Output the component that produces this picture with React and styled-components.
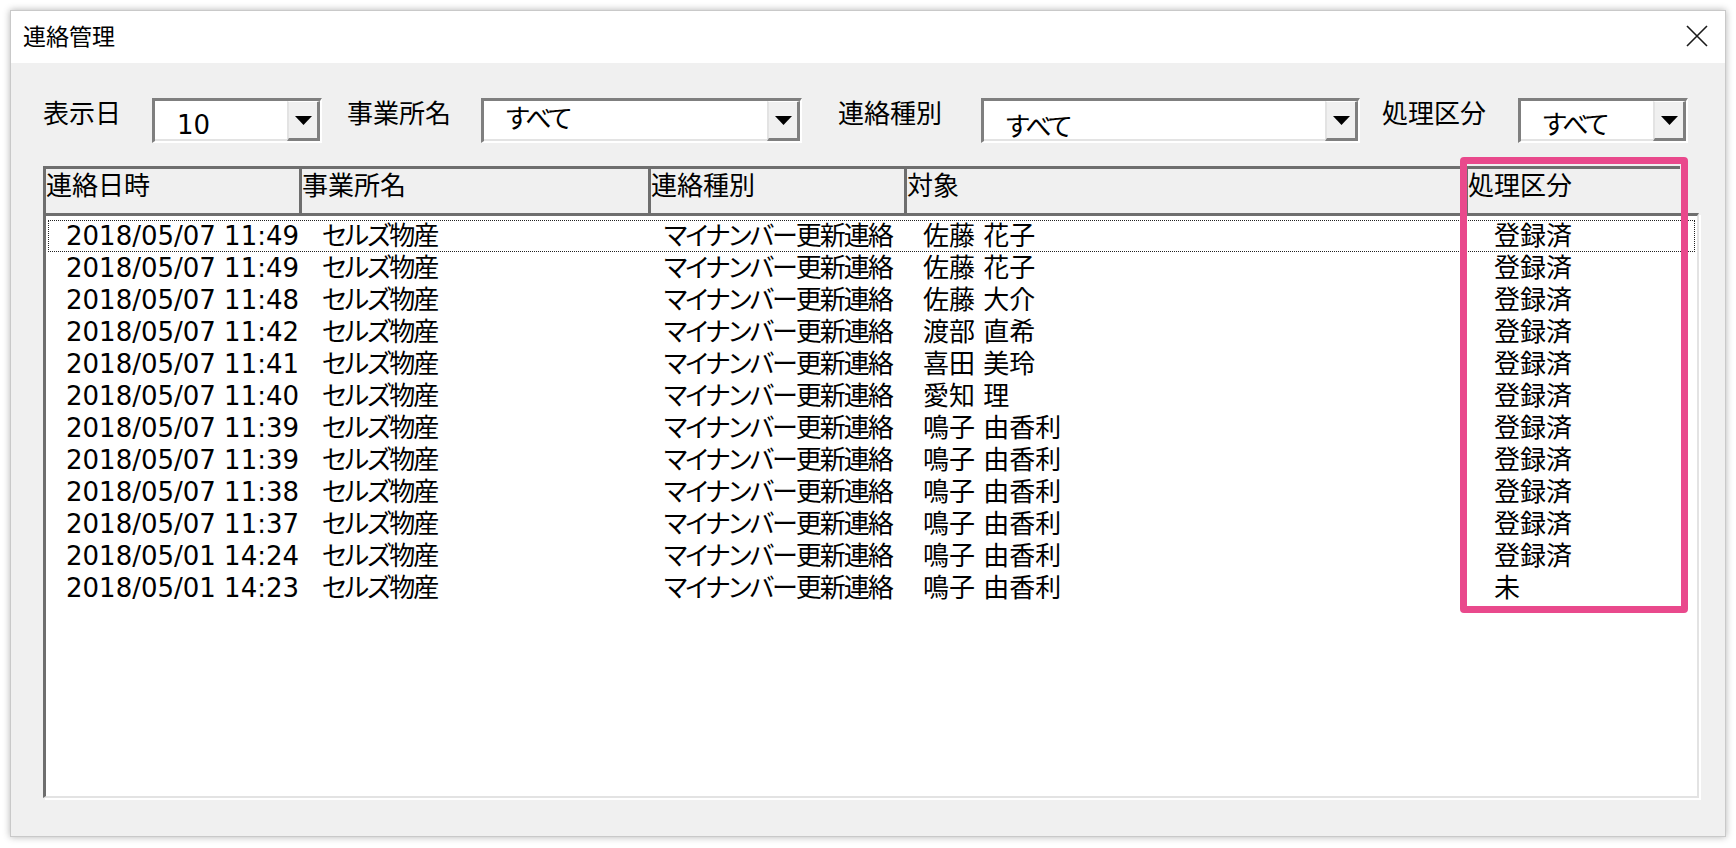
import React from "react";
import styled, { createGlobalStyle } from "styled-components";

const GlobalStyle = createGlobalStyle`
  html, body {
    margin: 0;
    background: #fff;
  }
  body {
    font-family: "DejaVu Sans", "Noto Sans CJK JP", sans-serif;
    font-feature-settings: "palt";
    color: #000;
  }
`;

const filters = [
  { label: "表示日", value: "10", labelWidth: 109, comboWidth: 170, gap: 0, offset: 4 },
  { label: "事業所名", value: "すべて", labelWidth: 134, comboWidth: 321, gap: 25, offset: -2 },
  { label: "連絡種別", value: "すべて", labelWidth: 143, comboWidth: 379, gap: 36, offset: 6 },
  { label: "処理区分", value: "すべて", labelWidth: 136, comboWidth: 170, gap: 22, offset: 4 },
];

const columns = [
  { title: "連絡日時", width: 256 },
  { title: "事業所名", width: 349 },
  { title: "連絡種別", width: 256 },
  { title: "対象", width: 561 },
  { title: "処理区分", width: 215 },
];

const rows = [
  ["2018/05/07 11:49", "佐藤 花子", "登録済"],
  ["2018/05/07 11:49", "佐藤 花子", "登録済"],
  ["2018/05/07 11:48", "佐藤 大介", "登録済"],
  ["2018/05/07 11:42", "渡部 直希", "登録済"],
  ["2018/05/07 11:41", "喜田 美玲", "登録済"],
  ["2018/05/07 11:40", "愛知 理", "登録済"],
  ["2018/05/07 11:39", "鳴子 由香利", "登録済"],
  ["2018/05/07 11:39", "鳴子 由香利", "登録済"],
  ["2018/05/07 11:38", "鳴子 由香利", "登録済"],
  ["2018/05/07 11:37", "鳴子 由香利", "登録済"],
  ["2018/05/01 14:24", "鳴子 由香利", "登録済"],
  ["2018/05/01 14:23", "鳴子 由香利", "未"],
];

const CloseIcon = () => (
  <svg width="22" height="22" viewBox="0 0 22 22">
    <path d="M1 1 L21 21 M21 1 L1 21" stroke="#1a1a1a" strokeWidth="1.6" fill="none" />
  </svg>
);

const Arrow = () => (
  <svg width="17" height="9" viewBox="0 0 17 9">
    <polygon points="0,0 17,0 8.5,9" fill="#000" />
  </svg>
);

const App = () => {
  return (
    <>
      <GlobalStyle />
      <Window>
        <TitleBar>
          <Title>連絡管理</Title>
          <CloseButton>
            <CloseIcon />
          </CloseButton>
        </TitleBar>
        <Body>
          <FilterRow>
            {filters.map((f) => (
              <Field key={f.label} $gap={f.gap}>
                <Label $width={f.labelWidth}>{f.label}</Label>
                <Combo $width={f.comboWidth}>
                  <ComboValue $offset={f.offset} $tight={f.value !== "10"}>
                    {f.value}
                  </ComboValue>
                  <DropButton>
                    <Arrow />
                  </DropButton>
                </Combo>
              </Field>
            ))}
          </FilterRow>

          <ListArea>
            <HeaderRow>
              {columns.map((c) => (
                <HeaderCell key={c.title} $width={c.width}>
                  {c.title}
                </HeaderCell>
              ))}
            </HeaderRow>
            <ListBox>
              {rows.map((r, i) => (
                <Row key={i} $focused={i === 0}>
                  <Cell>{r[0]}</Cell>
                  <Cell $tight>セルズ物産</Cell>
                  <Cell $tight>マイナンバー更新連絡</Cell>
                  <Cell>{r[1]}</Cell>
                  <Cell>{r[2]}</Cell>
                </Row>
              ))}
            </ListBox>
            <Highlight />
          </ListArea>
        </Body>
      </Window>
    </>
  );
};

export default App;

const Window = styled.div`
  margin: 10px;
  width: 1716px;
  height: 827px;
  box-sizing: border-box;
  border: 1px solid #c9c9c9;
  box-shadow: 0 0 7px rgba(0, 0, 0, 0.3);
  background: #f0f0f0;
  display: flex;
  flex-direction: column;
`;

const TitleBar = styled.div`
  height: 52px;
  background: #fff;
  display: flex;
  align-items: center;
  justify-content: space-between;
  padding: 0 17px 0 12px;
`;

const Title = styled.div`
  font-size: 23px;
  line-height: 23px;
`;

const CloseButton = styled.div`
  display: flex;
  align-items: center;
  margin-top: -2px;
`;

const Body = styled.div`
  flex: 1;
  padding: 35px 24px 0 32px;
`;

const FilterRow = styled.div`
  display: flex;
  align-items: flex-start;
`;

const Field = styled.div`
  display: flex;
  align-items: flex-start;
  margin-left: ${(p) => p.$gap}px;
`;

const Label = styled.div`
  width: ${(p) => p.$width}px;
  font-size: 26px;
  line-height: 26px;
  margin-top: 3px;
  white-space: nowrap;
`;

const Combo = styled.div`
  width: ${(p) => p.$width}px;
  height: 45px;
  box-sizing: border-box;
  display: flex;
  border-top: 3px solid #7f7f7f;
  border-left: 3px solid #7f7f7f;
  border-right: 2px solid #fff;
  border-bottom: 2px solid #fff;
`;

const ComboValue = styled.div`
  flex: 1;
  background: #fff;
  border-bottom: 2px solid #e3e3e3;
  padding: ${(p) => 7 + p.$offset}px 0 0 22px;
  font-size: 26px;
  line-height: 26px;
  letter-spacing: ${(p) => (p.$tight ? "-2.5px" : "0")};
  white-space: nowrap;
  overflow: hidden;
`;

const DropButton = styled.div`
  width: 33px;
  box-sizing: border-box;
  background: #f0f0f0;
  border-top: 1px solid #fff;
  border-left: 2px solid #e3e3e3;
  border-right: 3px solid #7f7f7f;
  border-bottom: 3px solid #7f7f7f;
  display: flex;
  align-items: center;
  justify-content: center;
`;

const ListArea = styled.div`
  position: relative;
  margin-top: 23px;
  width: 1658px;
`;

const HeaderRow = styled.div`
  display: flex;
  height: 47px;
`;

const HeaderCell = styled.div`
  width: ${(p) => p.$width}px;
  box-sizing: border-box;
  border-top: 3px solid #6e6e6e;
  border-left: 3px solid #6e6e6e;
  font-size: 26px;
  line-height: 26px;
  padding-top: 4px;
  white-space: nowrap;
`;

const ListBox = styled.div`
  width: 1656px;
  height: 585px;
  box-sizing: border-box;
  background: #fff;
  border-top: 3px solid #6e6e6e;
  border-left: 3px solid #6e6e6e;
  border-right: 2px solid #e3e3e3;
  border-bottom: 2px solid #e3e3e3;
  box-shadow: 2px 2px 0 #fff;
  padding-top: 4px;
`;

const Row = styled.div`
  display: grid;
  grid-template-columns: 256px 342px 259px 571px 1fr;
  height: 32px;
  line-height: 32px;
  margin: 0 2px;
  padding-left: 18px;
  font-size: 26px;
  outline: ${(p) => (p.$focused ? "1px dotted #222" : "none")};
  outline-offset: -1px;
`;

const Cell = styled.div`
  white-space: nowrap;
  letter-spacing: ${(p) => (p.$tight ? "-2px" : "0")};
`;

const Highlight = styled.div`
  position: absolute;
  left: 1417px;
  top: -9px;
  width: 228px;
  height: 456px;
  box-sizing: border-box;
  border: 7px solid #e9498c;
  border-radius: 4px;
  pointer-events: none;
`;
